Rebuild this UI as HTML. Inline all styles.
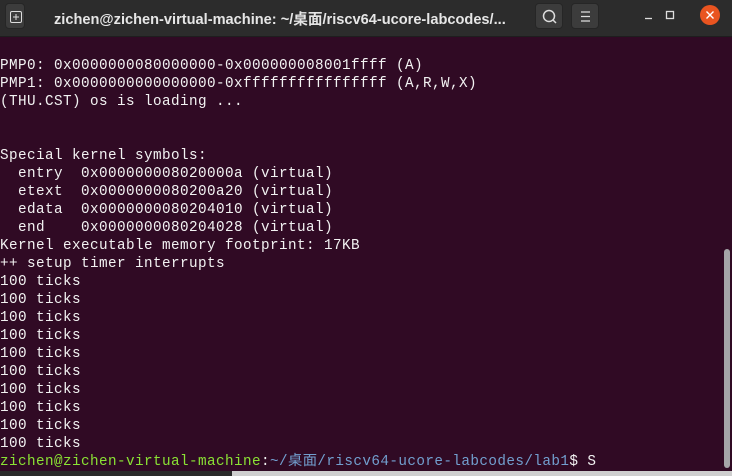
<!DOCTYPE html>
<html><head><meta charset="utf-8"><style>
html,body{margin:0;padding:0;}
body{width:732px;height:476px;overflow:hidden;background:#300a24;position:relative;font-family:"Liberation Sans","Noto Sans CJK SC",sans-serif;}
.tb{position:absolute;left:0;top:0;width:732px;height:36px;background:#2c2c2c;border-bottom:1px solid #1e1e1e;}
.btn{position:absolute;top:3px;width:28px;height:26px;background:#3c3c3c;border-radius:4px;border:1px solid #262626;box-sizing:border-box;}
.title{position:absolute;left:54px;top:8px;color:#e6e6e6;font-weight:bold;font-size:14.6px;white-space:nowrap;}
.term{position:absolute;left:0;top:57px;font-family:"Liberation Mono","Noto Sans CJK SC",monospace;font-size:14.3px;letter-spacing:0.42px;line-height:18px;color:#f2f2f2;white-space:pre;}
.g{color:#8ae234;}
.b{color:#729fcf;}
.sb{position:absolute;left:724px;top:249px;width:6px;height:219px;background:#a5a5a8;border-radius:3px;}
.bot{position:absolute;left:0;top:471px;width:732px;height:5px;background:#cfcfcf;}
.bot2{position:absolute;left:0;top:471px;width:232px;height:5px;background:#2a2a2a;}
</style></head><body>
<div class="tb">
 <div class="btn" style="left:5px;width:20px;">
  <svg width="20" height="26" viewBox="0 0 20 26"><rect x="4.5" y="7.5" width="11" height="11" rx="1.5" fill="none" stroke="#ddd" stroke-width="1"/><path d="M10 10v6M7 13h6" stroke="#ddd" stroke-width="1"/></svg>
 </div>
 <div class="title">zichen@zichen-virtual-machine: ~/桌面/riscv64-ucore-labcodes/...</div>
 <div class="btn" style="left:535px;">
  <svg width="28" height="26" viewBox="0 0 28 26"><circle cx="13" cy="12" r="5.5" fill="none" stroke="#ddd" stroke-width="1.5"/><path d="M17 16l3 3" stroke="#ddd" stroke-width="1.5"/></svg>
 </div>
 <div class="btn" style="left:571px;">
  <svg width="28" height="26" viewBox="0 0 28 26"><path d="M9 8h9M9 12.5h9M9 17h9" stroke="#ddd" stroke-width="1.3"/></svg>
 </div>
 <svg style="position:absolute;left:620px;top:0" width="112" height="36" viewBox="0 0 112 36">
  <path d="M25 18.5h7" stroke="#ddd" stroke-width="1.3"/>
  <rect x="46.5" y="11.5" width="7" height="7" fill="none" stroke="#ddd" stroke-width="1.3"/>
  <circle cx="90" cy="15" r="10" fill="#e95420"/>
  <path d="M86.5 11.5l7 7M93.5 11.5l-7 7" stroke="#fff" stroke-width="1.4"/>
 </svg>
</div>
<div class="term">PMP0: 0x0000000080000000-0x000000008001ffff (A)
PMP1: 0x0000000000000000-0xffffffffffffffff (A,R,W,X)
(THU.CST) os is loading ...


Special kernel symbols:
  entry  0x000000008020000a (virtual)
  etext  0x0000000080200a20 (virtual)
  edata  0x0000000080204010 (virtual)
  end    0x0000000080204028 (virtual)
Kernel executable memory footprint: 17KB
++ setup timer interrupts
100 ticks
100 ticks
100 ticks
100 ticks
100 ticks
100 ticks
100 ticks
100 ticks
100 ticks
100 ticks
<span class="g">zichen@zichen-virtual-machine</span>:<span class="b">~/桌面/riscv64-ucore-labcodes/lab1</span>$ S</div>
<div class="sb"></div>
<div class="bot"></div><div class="bot2"></div>
</body></html>
